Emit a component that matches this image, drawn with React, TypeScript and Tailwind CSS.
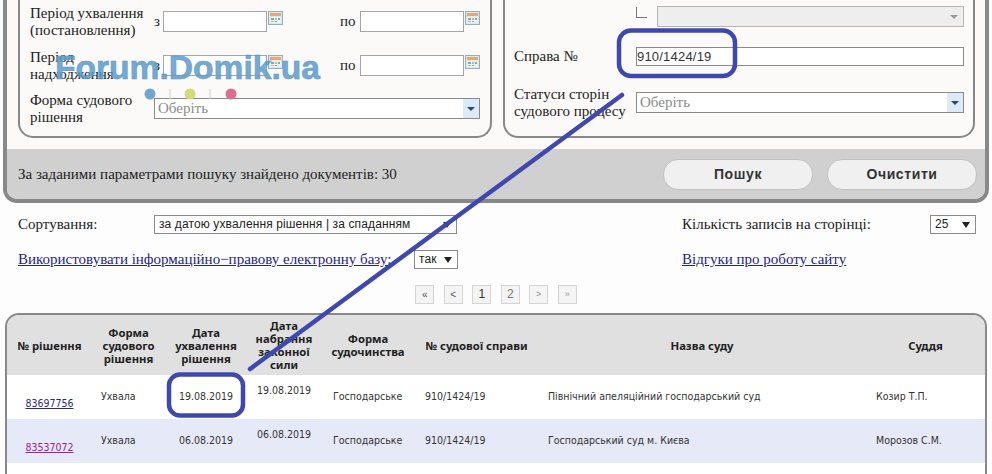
const serif = "font-['Liberation_Serif',serif] text-[15px] leading-[17px] text-[#222]"

function CalendarIcon() {
  return (
    <svg width="15" height="14" viewBox="0 0 15 14" className="ml-px shrink-0">
      <rect x="0.5" y="0.5" width="14" height="13" fill="#dbe8ee" stroke="#8fb0c0" />
      <rect x="2" y="2" width="11" height="3" fill="#e9a673" />
      <rect x="2" y="6" width="11" height="6" fill="#eef2ee" />
      <rect x="3" y="7" width="3" height="2" fill="#8aa6a0" />
      <rect x="7" y="7" width="2" height="2" fill="#a8c29a" />
      <rect x="10" y="7" width="2" height="2" fill="#8aa6a0" />
      <rect x="3" y="10" width="3" height="1" fill="#a8c29a" />
      <rect x="7" y="10" width="2" height="1" fill="#8aa6a0" />
    </svg>
  )
}

function DateInput() {
  return (
    <div className="h-[21px] flex items-start shrink-0">
      <div className="w-[104px] h-[21px] bg-white border border-[#a5a5a5]" />
      <CalendarIcon />
    </div>
  )
}

function ChooseSelect({ width }: { width: string }) {
  return (
    <div className={`${width} h-[21px] bg-white border border-[#8a8a8a] flex items-center justify-between shrink-0`}>
      <span className="pl-[3px] font-['Liberation_Serif',serif] text-[15px] text-[#8a8a8a]">Оберіть</span>
      <span className="w-4 h-full bg-[#dce9f6] flex items-center justify-center">
        <span className="w-0 h-0 border-x-[4px] border-x-transparent border-t-[4px] border-t-[#2b4a78]" />
      </span>
    </div>
  )
}

function PageButton({ label, tone }: { label: string; tone: string }) {
  return (
    <span className={`w-[19px] h-[19px] bg-[#f4f4f4] border border-[#d4d4d4] flex items-center justify-center font-['Liberation_Sans',sans-serif] ${tone}`}>
      {label}
    </span>
  )
}

function NativeSelect({ value, width }: { value: string; width: string }) {
  return (
    <div className={`${width} h-[19px] bg-white border border-[#8a8a8a] flex items-center justify-between pl-[4px] pr-[5px] font-['Liberation_Sans',sans-serif] text-[12px] text-[#222] tracking-[0.12px] shrink-0`}>
      <span>{value}</span>
      <span className="w-0 h-0 border-x-[4px] border-x-transparent border-t-[6px] border-t-[#222]" />
    </div>
  )
}

const rows = [
  { id: "83697756", date: "19.08.2019", court: "Північний апеляційний господарський суд", judge: "Козир Т.П.", link: "text-[#2a2a80]", bg: "bg-white" },
  { id: "83537072", date: "06.08.2019", court: "Господарський суд м. Києва", judge: "Морозов С.М.", link: "text-[#a0209a]", bg: "bg-[#e6e9f8]" },
]

export default function App() {
  return (
    <div className="relative w-[992px] h-[474px] overflow-hidden bg-[#fdfdfd]">
      {/* Search form */}
      <div className="mx-[3px] h-[203px] bg-[#fbfaf8] border-x-4 border-b-4 border-[#888] rounded-b-[14px] overflow-hidden flex flex-col">
        <div className={`${serif} h-[149px] flex gap-[11px] pl-[11px] shrink-0`}>
          {/* Left fieldset */}
          <div className="w-[474px] h-[138px] border-x-2 border-b-2 border-[#888] rounded-b-[15px] pl-[10px] pt-[4px] flex flex-col gap-[9px]">
            <div className="h-[35px] flex items-center">
              <div className="w-[124px]">Період ухвалення (постановлення)</div>
              <span className="w-[9px]">з</span>
              <DateInput />
              <span className="ml-[57px] w-[20px]">по</span>
              <DateInput />
            </div>
            <div className="h-[35px] flex items-center">
              <div className="w-[110px] mr-[14px]">Період надходження</div>
              <span className="w-[9px]">з</span>
              <DateInput />
              <span className="ml-[57px] w-[20px]">по</span>
              <DateInput />
            </div>
            <div className="h-[35px] -mt-px flex items-center">
              <div className="w-[124px]">Форма судового рішення</div>
              <ChooseSelect width="w-[326px]" />
            </div>
          </div>
          {/* Right fieldset */}
          <div className="w-[472px] h-[138px] border-x-2 border-b-2 border-[#888] rounded-b-[15px] pl-[9px] pt-[6px] flex flex-col">
            <div className="h-[21px] flex pl-[122px]">
              <span className="w-[11px] h-[11px] mt-px mr-[10px] border-l border-b border-[#777]" />
              <div className="w-[307px] h-[21px] bg-[#eeeeee] border border-[#b5b5b5] flex items-center justify-end pr-[5px]">
                <span className="w-0 h-0 border-x-[4px] border-x-transparent border-t-[4px] border-t-[#999]" />
              </div>
            </div>
            <div className="h-[19px] mt-[20px] flex items-center">
              <div className="w-[122px]">Справа №</div>
              <div className="w-[328px] h-[19px] bg-white border border-[#8a8a8a] flex items-center font-['Liberation_Sans',sans-serif] text-[13px] text-[#333] tracking-[0.2px]">910/1424/19</div>
            </div>
            <div className="h-[21px] mt-[26px] flex items-center">
              <div className="w-[122px] shrink-0">Статуси сторін судового процесу</div>
              <ChooseSelect width="w-[328px]" />
            </div>
          </div>
        </div>
        <div className="flex-1 bg-[#d0d0d0] flex items-center justify-between pl-[11px] pr-[8px]">
          <span className={serif}>За заданими параметрами пошуку знайдено документів: 30</span>
          <div className="flex gap-[14px]">
            <button className="w-[150px] h-[31px] rounded-[15px] bg-[#f0f0f0] border border-[#c0c0c0] font-['Liberation_Sans',sans-serif] font-bold text-[14px] tracking-[0.6px] text-[#333]">Пошук</button>
            <button className="w-[150px] h-[31px] rounded-[15px] bg-[#f0f0f0] border border-[#c0c0c0] font-['Liberation_Sans',sans-serif] font-bold text-[14px] tracking-[0.6px] text-[#333]">Очистити</button>
          </div>
        </div>
      </div>

      {/* Sort options */}
      <div className={`${serif} px-[18px] pt-[12px] h-[110px]`}>
        <div className="grid grid-cols-[664px_1fr] gap-y-[16px]">
          <div className="h-[19px] flex items-center">
            <span className="w-[136px]">Сортування:</span>
            <NativeSelect value="за датою ухвалення рішення | за спаданням" width="w-[303px]" />
          </div>
          <div className="h-[19px] flex items-center">
            <span className="w-[248px]">Кількість записів на сторінці:</span>
            <NativeSelect value="25" width="w-[46px]" />
          </div>
          <div className="h-[19px] flex items-center">
            <a className="w-[396px] underline text-[#24248c] whitespace-nowrap">Використовувати інформаційно−правову електронну базу:</a>
            <NativeSelect value="так" width="w-[44px]" />
          </div>
          <div className="h-[19px] flex items-center">
            <a className="underline text-[#24248c]">Відгуки про роботу сайту</a>
          </div>
        </div>
        <div className="mt-[16px] flex justify-center gap-[9.5px]">
          <PageButton label="«" tone="text-[10px] text-[#555]" />
          <PageButton label="<" tone="text-[10px] text-[#555]" />
          <PageButton label="1" tone="text-[12px] text-[#333]" />
          <PageButton label="2" tone="text-[12px] text-[#777]" />
          <PageButton label=">" tone="text-[9px] text-[#888]" />
          <PageButton label="»" tone="text-[9px] text-[#999]" />
        </div>
      </div>

      {/* Results table */}
      <div className="mx-[5px] h-[170px] border-x-2 border-t-2 border-[#888] rounded-t-[14px] overflow-hidden bg-white">
        <table className="w-full table-fixed border-collapse font-['DejaVu_Sans_Condensed','Noto_Sans',sans-serif] text-[10.5px] text-[#333]">
          <colgroup>
            <col className="w-[85px]" />
            <col className="w-[73px]" />
            <col className="w-[82px]" />
            <col className="w-[74px]" />
            <col className="w-[94px]" />
            <col className="w-[123px]" />
            <col className="w-[328px]" />
            <col />
          </colgroup>
          <thead>
            <tr className="h-[60px] bg-[#e0e0e0] font-['Noto_Sans',sans-serif] text-[11.3px] leading-[13px] font-bold text-[#222] text-center">
              <th>№ рішення</th>
              <th>Форма судового рішення</th>
              <th>Дата ухвалення рішення</th>
              <th>Дата набрання законної сили</th>
              <th>Форма судочинства</th>
              <th>№ судової справи</th>
              <th>Назва суду</th>
              <th>Суддя</th>
            </tr>
          </thead>
          <tbody>
            {rows.map((row) => (
              <tr key={row.id} className={`h-[44px] ${row.bg}`}>
                <td className="text-center pt-[14px]"><a className={`underline ${row.link}`}>{row.id}</a></td>
                <td className="pl-[9px]">Ухвала</td>
                <td className="text-center">{row.date}</td>
                <td className="text-center pb-[12px]">{row.date}</td>
                <td className="pl-[12px]">Господарське</td>
                <td className="pl-[10px]">910/1424/19</td>
                <td className="pl-[10px]">{row.court}</td>
                <td className="pl-[10px]">{row.judge}</td>
              </tr>
            ))}
          </tbody>
        </table>
      </div>

      {/* Forum watermark */}
      <div className="absolute left-[55px] top-[49px] font-['Liberation_Sans',sans-serif] font-bold text-[33.6px] leading-[38px] text-[#5c9bcb]/85 [-webkit-text-stroke:0.6px_#5c9bcb] whitespace-nowrap">Forum.Domik.ua</div>
      <svg className="absolute left-[140px] top-[85px]" width="100" height="18" viewBox="0 0 100 18">
        <circle cx="10" cy="9" r="5.5" fill="#6fa5d0" />
        <line x1="30" y1="4" x2="30" y2="14" stroke="#ccc" />
        <circle cx="50" cy="9" r="5.5" fill="#d5d97a" />
        <line x1="70" y1="4" x2="70" y2="14" stroke="#ccc" />
        <circle cx="91" cy="9" r="5.5" fill="#d9708f" />
      </svg>

      {/* Hand drawn annotation */}
      <svg className="absolute inset-0" width="992" height="474" viewBox="0 0 992 474" fill="none" stroke="#3f48ae">
        <rect x="619" y="30.5" width="116" height="45.5" rx="12" strokeWidth="4.5" />
        <line x1="622" y1="95" x2="250" y2="369" strokeWidth="4.5" strokeLinecap="round" />
        <rect x="169" y="374.5" width="74" height="41" rx="11" strokeWidth="4.5" />
      </svg>
    </div>
  )
}
